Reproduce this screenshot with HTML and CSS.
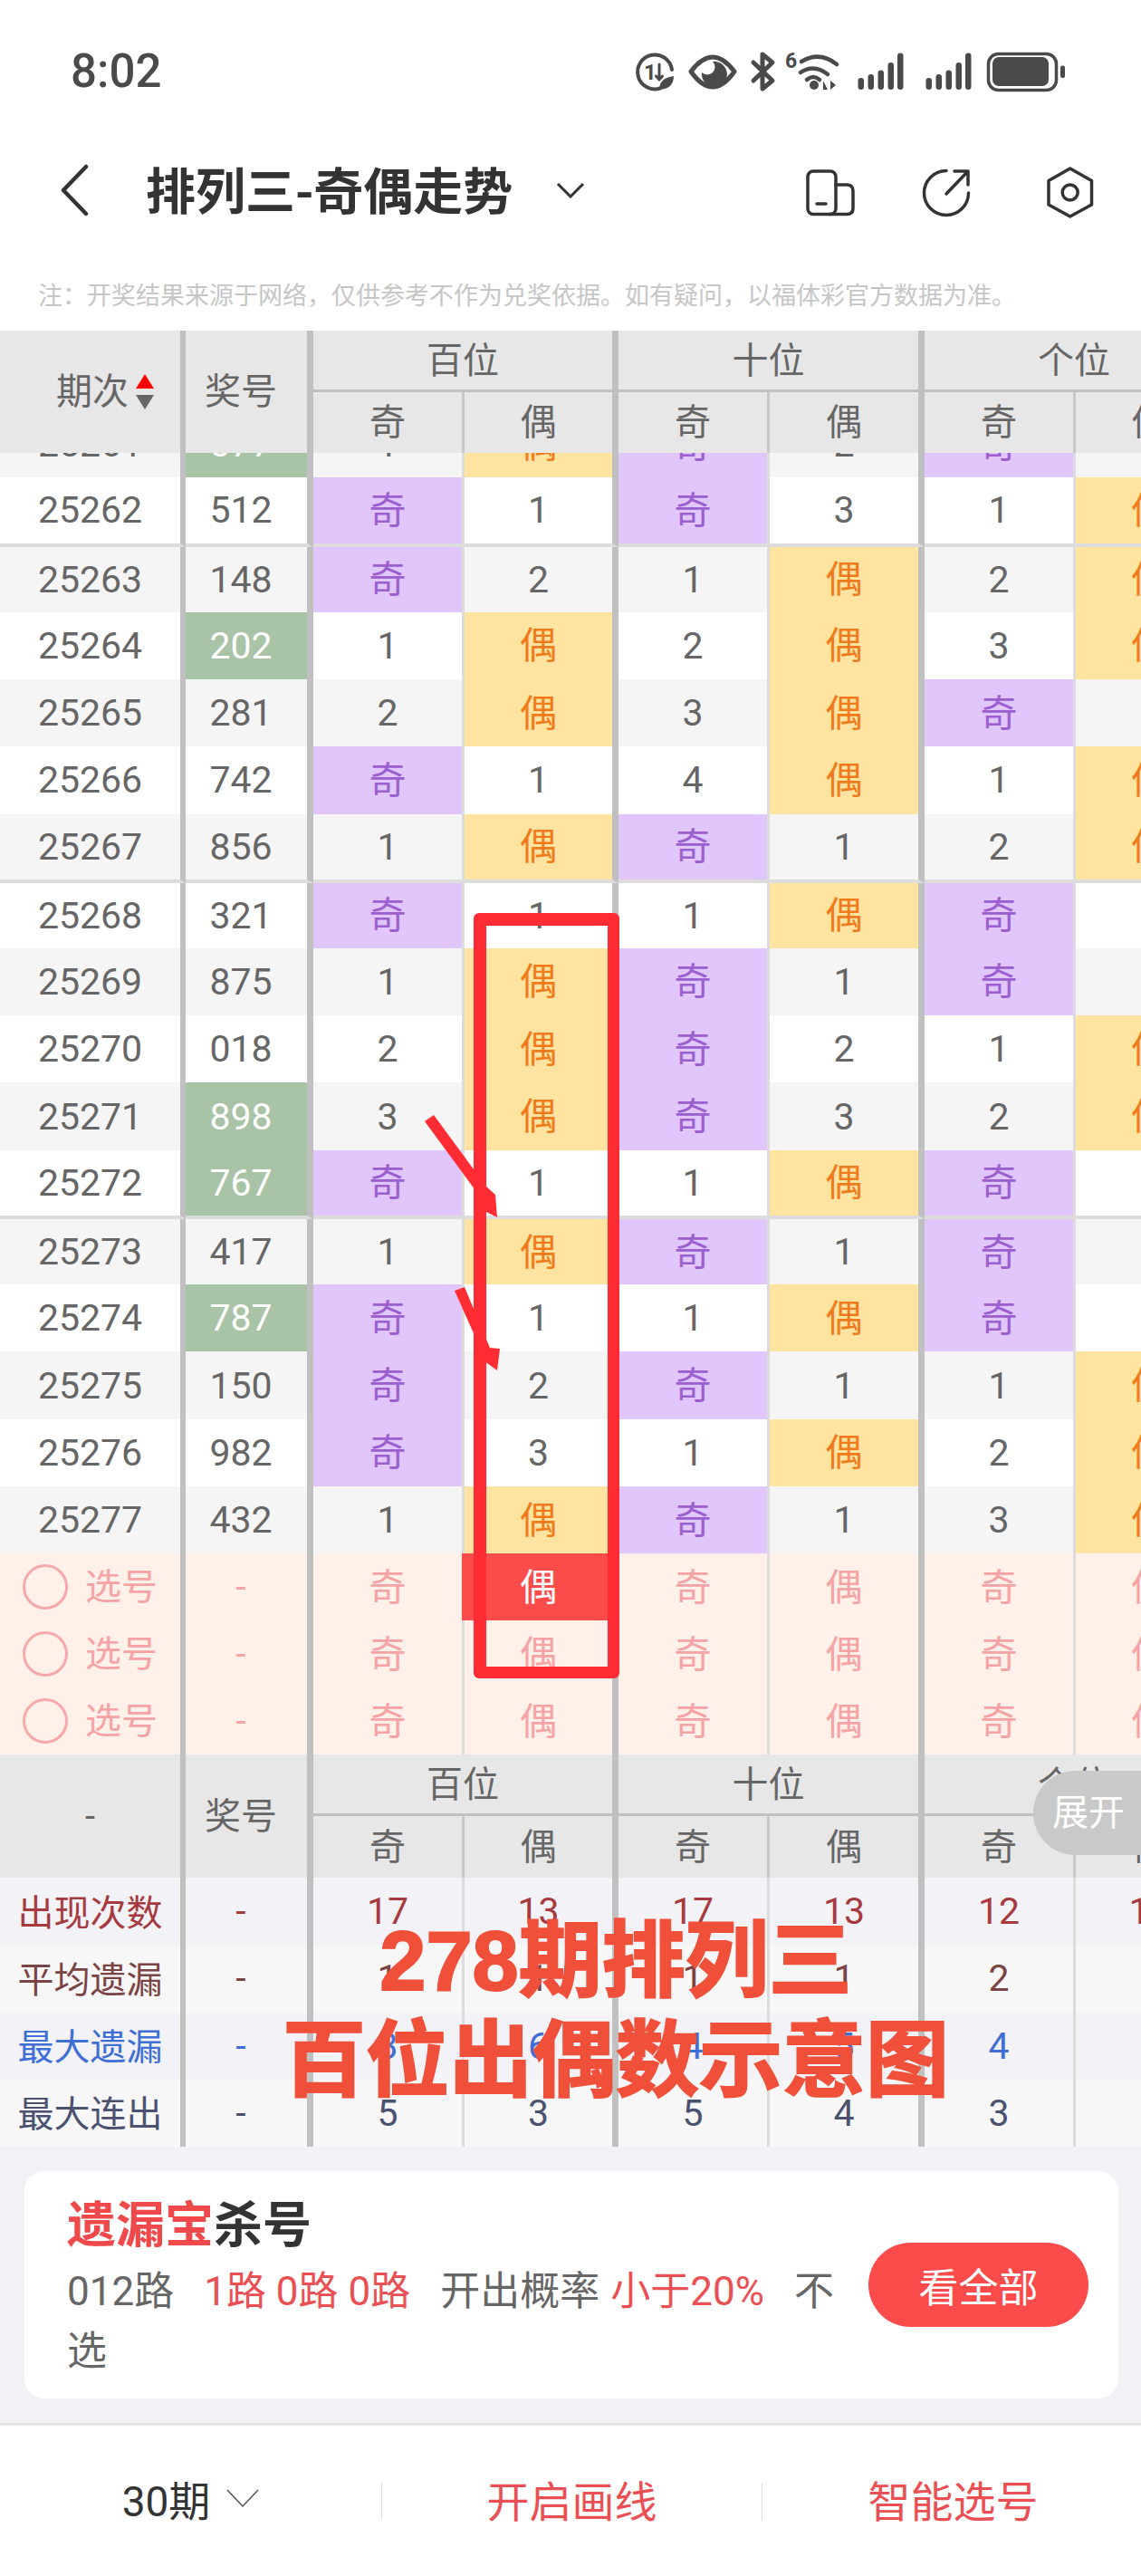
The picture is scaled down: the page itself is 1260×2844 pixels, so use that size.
FILE: index.html
```html
<!DOCTYPE html>
<html lang="zh-CN">
<head>
  <meta charset="UTF-8">
  <meta name="viewport" content="width=device-width, initial-scale=1.0">
  <title>排列三-奇偶走势</title>
  <link rel="stylesheet" href="styles.css">
</head>
<body>
<div class="page">

  <div class="status">
    <span class="time">8:02</span>
    <svg class="status-icons" width="490" height="65" viewBox="0 0 490 65">
      <g fill="none" stroke="#4a4a4a" stroke-linecap="round" stroke-linejoin="round">
        <path d="M34 51.5A19 19 0 1 1 47 31" stroke-width="4"/>
        <path d="M33 25V42M33 42l-3.5-4M33 42l3.5-4" stroke-width="3"/>
        <path d="M68 33Q80 17 92 17T116 33Q104 50 92 50T68 33Z" stroke-width="5"/>
        <path d="M137 23L158 43L147 52V14L158 23L137 43" stroke-width="5"/>
        <path d="M190 22Q210 10 229 25M189 34Q204 24 219 36M196 42Q203 36 210 42" stroke-width="4.5"/>
      </g>
      <g fill="#4a4a4a">
        <text class="icon-num" x="16" y="42">1</text>
        <path d="M33 53Q33 40 49 38Q49 52 33 53Z"/>
        <path d="M92 22A14 14 0 1 1 80 34A8 8 0 0 0 92 22Z"/>
        <text class="icon-num-big" x="172" y="29">6</text>
        <circle cx="204" cy="48" r="5"/>
        <path d="M214 53V43L219 53ZM222 53V43L228 48Z"/>
        <rect x="252.5" y="40" width="6.500" height="13" rx="3.250"/>
        <rect x="263.500" y="36" width="6.500" height="17" rx="3.250"/>
        <rect x="274.500" y="31.500" width="6.500" height="21.500" rx="3.250"/>
        <rect x="285.500" y="23" width="6.500" height="30" rx="3.250"/>
        <rect x="296" y="12.500" width="6.500" height="40.500" rx="3.250"/>
        <rect x="327.500" y="40" width="6.500" height="13" rx="3.250"/>
        <rect x="338.500" y="36" width="6.500" height="17" rx="3.250"/>
        <rect x="349.500" y="31.500" width="6.500" height="21.500" rx="3.250"/>
        <rect x="360.500" y="23" width="6.500" height="30" rx="3.250"/>
        <rect x="371" y="12.500" width="6.500" height="40.500" rx="3.250"/>
        <rect x="401" y="17" width="62" height="32" rx="7"/>
        <rect x="476" y="26.500" width="5" height="13.500" rx="2"/>
      </g>
      <rect x="396.500" y="13.500" width="75" height="40" rx="11" fill="none" stroke="#4a4a4a" stroke-width="3.500"/>
    </svg>
  </div>

  <div class="nav">
    <svg class="back" width="34" height="58" viewBox="0 0 34 58"><path d="M30 3L5 29L30 55" fill="none" stroke="#333" stroke-width="4.500" stroke-linecap="round" stroke-linejoin="round"/></svg>
    <h1 class="nav-title">排列三-奇偶走势</h1>
    <svg class="nav-arrow" width="32" height="18" viewBox="0 0 32 18"><path d="M2 2L16 16L30 2" fill="none" stroke="#333" stroke-width="3"/></svg>
    <svg class="nav-icons" width="340" height="75" viewBox="0 0 340 75">
      <g fill="none" stroke="#333" stroke-width="3.500" stroke-linecap="round" stroke-linejoin="round">
        <rect x="12" y="14" width="31" height="47.500" rx="6"/>
        <path d="M43 29H55Q62 29 62 36V55Q62 61.500 55 61.500H36M22 50H32"/>
        <path d="M165 13.500A24.500 24.500 0 1 0 189.500 38M165 39L188 15M174 14H189V29"/>
        <path d="M301.700 11L325.500 24.500V51L301.700 64L278 51V24.500Z"/>
        <circle cx="301.700" cy="37.500" r="8.500"/>
      </g>
    </svg>
  </div>

  <p class="note">注：开奖结果来源于网络，仅供参考不作为兑奖依据。如有疑问，以福体彩官方数据为准。</p>

  <div class="thead">
    <div class="hd-period">期次<span class="sort"><i class="sort-up"></i><i class="sort-down"></i></span></div>
    <div class="hd-num">奖号</div>
    <div class="group"><div class="group-title">百位</div><div>奇</div><div>偶</div></div>
    <div class="group"><div class="group-title">十位</div><div>奇</div><div>偶</div></div>
    <div class="group"><div class="group-title">个位</div><div>奇</div><div>偶</div></div>
  </div>

  <div class="tbody">
    <div class="rows">
      <div class="row gray"><div>25261</div><div class="g">877</div><div>1</div><div class="y">偶</div><div class="p">奇</div><div>2</div><div class="p">奇</div><div></div></div>
      <div class="row sep"><div>25262</div><div>512</div><div class="p">奇</div><div>1</div><div class="p">奇</div><div>3</div><div>1</div><div class="y">偶</div></div>
      <div class="row first gray"><div>25263</div><div>148</div><div class="p">奇</div><div>2</div><div>1</div><div class="y">偶</div><div>2</div><div class="y">偶</div></div>
      <div class="row"><div>25264</div><div class="g">202</div><div>1</div><div class="y">偶</div><div>2</div><div class="y">偶</div><div>3</div><div class="y">偶</div></div>
      <div class="row gray"><div>25265</div><div>281</div><div>2</div><div class="y">偶</div><div>3</div><div class="y">偶</div><div class="p">奇</div><div></div></div>
      <div class="row"><div>25266</div><div>742</div><div class="p">奇</div><div>1</div><div>4</div><div class="y">偶</div><div>1</div><div class="y">偶</div></div>
      <div class="row sep gray"><div>25267</div><div>856</div><div>1</div><div class="y">偶</div><div class="p">奇</div><div>1</div><div>2</div><div class="y">偶</div></div>
      <div class="row first"><div>25268</div><div>321</div><div class="p">奇</div><div>1</div><div>1</div><div class="y">偶</div><div class="p">奇</div><div></div></div>
      <div class="row gray"><div>25269</div><div>875</div><div>1</div><div class="y">偶</div><div class="p">奇</div><div>1</div><div class="p">奇</div><div></div></div>
      <div class="row"><div>25270</div><div>018</div><div>2</div><div class="y">偶</div><div class="p">奇</div><div>2</div><div>1</div><div class="y">偶</div></div>
      <div class="row gray"><div>25271</div><div class="g">898</div><div>3</div><div class="y">偶</div><div class="p">奇</div><div>3</div><div>2</div><div class="y">偶</div></div>
      <div class="row sep"><div>25272</div><div class="g">767</div><div class="p">奇</div><div>1</div><div>1</div><div class="y">偶</div><div class="p">奇</div><div></div></div>
      <div class="row first gray"><div>25273</div><div>417</div><div>1</div><div class="y">偶</div><div class="p">奇</div><div>1</div><div class="p">奇</div><div></div></div>
      <div class="row"><div>25274</div><div class="g">787</div><div class="p">奇</div><div>1</div><div>1</div><div class="y">偶</div><div class="p">奇</div><div></div></div>
      <div class="row gray"><div>25275</div><div>150</div><div class="p">奇</div><div>2</div><div class="p">奇</div><div>1</div><div>1</div><div class="y">偶</div></div>
      <div class="row"><div>25276</div><div>982</div><div class="p">奇</div><div>3</div><div>1</div><div class="y">偶</div><div>2</div><div class="y">偶</div></div>
      <div class="row gray"><div>25277</div><div>432</div><div>1</div><div class="y">偶</div><div class="p">奇</div><div>1</div><div>3</div><div class="y">偶</div></div>
    </div>
  </div>

  <div class="row pick"><div><i class="pick-dot"></i>选号</div><div>-</div><div>奇</div><div class="picked">偶</div><div>奇</div><div>偶</div><div>奇</div><div>偶</div></div>
  <div class="row pick"><div><i class="pick-dot"></i>选号</div><div>-</div><div>奇</div><div>偶</div><div>奇</div><div>偶</div><div>奇</div><div>偶</div></div>
  <div class="row pick"><div><i class="pick-dot"></i>选号</div><div>-</div><div>奇</div><div>偶</div><div>奇</div><div>偶</div><div>奇</div><div>偶</div></div>

  <div class="thead thead-bottom">
    <div class="hd-dash">-</div>
    <div class="hd-num">奖号</div>
    <div class="group"><div class="group-title">百位</div><div>奇</div><div>偶</div></div>
    <div class="group"><div class="group-title">十位</div><div>奇</div><div>偶</div></div>
    <div class="group"><div class="group-title">个位</div><div>奇</div><div>偶</div></div>
  </div>

  <div class="row stat stat-red"><div>出现次数</div><div>-</div><div>17</div><div>13</div><div>17</div><div>13</div><div>12</div><div>18</div></div>
  <div class="row stat stat-brown"><div>平均遗漏</div><div>-</div><div>1</div><div>1</div><div>1</div><div>1</div><div>2</div><div></div></div>
  <div class="row stat stat-blue"><div>最大遗漏</div><div>-</div><div>3</div><div>6</div><div>4</div><div>5</div><div>4</div><div></div></div>
  <div class="row stat stat-slate"><div>最大连出</div><div>-</div><div>5</div><div>3</div><div>5</div><div>4</div><div>3</div><div></div></div>

  <div class="below">
    <div class="card">
      <div class="card-text">
        <div class="card-title"><span class="red">遗漏宝</span>杀号</div>
        <div class="card-desc">012路<span class="red gap">1路 0路 0路</span><span class="gap">开出概率</span><span class="red gap-small">小于20%</span><span class="gap">不选</span></div>
      </div>
      <button class="card-btn" type="button">看全部</button>
    </div>
  </div>

  <div class="footer">
    <div class="foot-item foot-period">30期<svg width="36" height="20" viewBox="0 0 36 20"><path d="M1 1L18 19L35 1" fill="none" stroke="#555" stroke-width="1.500"/></svg></div>
    <i class="foot-bar"></i>
    <div class="foot-item foot-line red">开启画线</div>
    <i class="foot-bar"></i>
    <div class="foot-item foot-smart red">智能选号</div>
  </div>

  <!-- annotations drawn over the table -->
  <div class="expand">展开</div>
  <div class="mark-box"></div>
  <svg class="mark-arrows" width="100" height="300" viewBox="460 1220 100 300">
    <polygon points="469,1238 479,1231 537,1310 547,1319 549,1344 527,1333 527,1317" fill="#ff2d33"/>
    <polygon points="502,1425 513,1421 541,1488 552,1489 549,1513 527,1497 532,1492" fill="#ff2d33"/>
  </svg>
  <div class="promo">278期排列三<br>百位出偶数示意图</div>

</div>
</body>
</html>
```

FILE: styles.css
```css
* {
  box-sizing: border-box;
}

body {
  margin: 0;
  background-color: #fff;
}

.page {
  position: relative;
  width: 1260px;
  height: 2844px;
  overflow: hidden;
  font-family: Roboto, "Noto Sans CJK SC", sans-serif;
  font-size: 41px;
  color: #666;
  background-color: #fff;
}

.red {
  color: #e94f53;
}

/* status bar */
.status {
  display: flex;
  align-items: center;
  justify-content: space-between;
  height: 156px;
  padding: 0 75px 0 78px;
}

.time {
  font-size: 51px;
  font-weight: 500;
  color: #4a4a4a;
}

.status-icons {
  display: block;
}

.icon-num {
  font-family: Roboto, sans-serif;
  font-size: 24px;
  font-weight: 700;
}

.icon-num-big {
  font-family: Roboto, sans-serif;
  font-size: 23px;
  font-weight: 700;
}

/* nav */
.nav {
  display: flex;
  align-items: center;
  height: 108px;
  padding-left: 65px;
}

.back {
  flex: none;
}

.nav-title {
  margin: 0 0 6px 62px;
  font-family: "Noto Sans CJK SC", sans-serif;
  font-size: 55px;
  font-weight: 700;
  color: #333;
  white-space: nowrap;
}

.nav-arrow {
  margin-left: 48px;
}

.nav-icons {
  position: absolute;
  left: 880px;
  top: 175px;
}

.note {
  height: 101px;
  margin: 0;
  padding: 41px 0 0 42px;
  font-family: "Noto Sans CJK SC", sans-serif;
  font-size: 27px;
  line-height: 40px;
  color: #c6c6c6;
  white-space: nowrap;
}

/* table header */
.thead {
  display: grid;
  grid-template-columns: 205px 141px 337px 338px 337px;
  height: 135px;
  background-color: #e7e7e7;
}

.thead-bottom {
  height: 136px;
}

.hd-period,
.hd-num,
.hd-dash {
  display: flex;
  align-items: center;
  border-right: 6px solid #c0c0c0;
  font-size: 40px;
}

.hd-period {
  padding: 0 0 7px 62px;
}

.hd-dash {
  justify-content: center;
}

.hd-num {
  justify-content: center;
  padding: 0 12px 7px 0;
  border-right-width: 7px;
}

.sort {
  display: flex;
  flex-direction: column;
  gap: 7px;
  margin: 0 0 -7px 8px;
}

.sort-up {
  border: 10px solid transparent;
  border-top: 0;
  border-bottom: 16px solid #f00;
}

.sort-down {
  border: 10px solid transparent;
  border-bottom: 0;
  border-top: 16px solid #666;
}

.group {
  display: grid;
  grid-template-columns: 167px 1fr;
  grid-template-rows: 68px 1fr;
  font-size: 40px;
}

.group > div {
  display: flex;
  align-items: center;
  justify-content: center;
  padding-bottom: 7px;
  border-right: 3px solid #c8c8c8;
}

.group > div:last-child {
  border-right: 7px solid #c0c0c0;
}

.group .group-title {
  grid-column: 1 / 3;
  padding-bottom: 5px;
  border-right: 7px solid #c0c0c0;
  border-bottom: 3px solid #c0c0c0;
}

/* table rows */
.tbody {
  height: 1215px;
  overflow: hidden;
}

.rows {
  margin-top: -47px;
}

.row {
  display: grid;
  grid-template-columns: 205px 141px 167px 170px 167px 171px 167px 170px;
  width: 1358px;
  height: 74.33px;
  background-color: #fff;
}

.row > div {
  display: flex;
  align-items: center;
  justify-content: center;
  border-right: 7px solid #c0c0c0;
}

.row > div:nth-child(1) {
  border-right-width: 6px;
}

.row > div:nth-child(2) {
  padding-right: 12px;
}

.row > div:nth-child(3),
.row > div:nth-child(5),
.row > div:nth-child(7) {
  border-right: 3px solid #dcdcdc;
}

.row.gray {
  background-color: #f5f5f5;
}

.row.sep {
  height: 76.25px;
}

.row.sep > div {
  border-bottom: 4px solid #dcdcdc;
}

.row.first {
  height: 72px;
}

.row > .p {
  padding-bottom: 7px;
  background-color: #e1c6fc;
  color: #9b5fd0;
}

.row > .y {
  padding-bottom: 7px;
  background-color: #ffe3a0;
  color: #ef7b1c;
}

.row > .g {
  background-color: #a8c3a6;
  color: #fff;
}

/* pick rows */
.row.pick {
  height: 74px;
  background-color: #fff0ea;
  color: #f6a3a5;
}

.row.pick > div:nth-child(n+3) {
  padding-bottom: 7px;
}

.pick-dot {
  width: 50px;
  height: 50px;
  margin: 0 19px -7px 0;
  border: 3px solid #f6a8aa;
  border-radius: 50%;
}

.row.pick > div:nth-child(1) {
  justify-content: flex-start;
  padding: 0 0 7px 25px;
  font-size: 40px;
}

.row.pick > .picked {
  background-color: #fb4b4b;
  box-shadow: -3px 0 0 #fb4b4b;
  color: #fff;
}

/* stats */
.row.stat {
  height: 74.25px;
  background-color: #f7f7f7;
}

.row.stat-red,
.row.stat-blue {
  background-color: #f2f2f7;
}

.stat-red {
  color: #a63a3e;
}

.stat-brown {
  color: #7b4444;
}

.stat-blue {
  color: #3f6fd4;
}

.stat-slate {
  color: #4a5270;
}

.row.stat > div:nth-child(1) {
  padding-bottom: 3px;
  font-size: 40px;
}

/* card */
.below {
  height: 305px;
  padding: 27px 25px 0 27px;
  background-color: #f2f2f6;
}

.card {
  display: flex;
  align-items: center;
  justify-content: space-between;
  height: 251px;
  padding: 0 33px 0 47px;
  border-radius: 22px;
  background-color: #fff;
}

.card-text {
  align-self: flex-start;
  width: 860px;
  margin-top: 21px;
}

.card-title {
  font-family: "Noto Sans CJK SC", sans-serif;
  font-size: 54px;
  font-weight: 700;
  line-height: 70px;
  color: #333;
}

.card-title .red {
  color: #f0494c;
}

.card-desc {
  margin-top: 9px;
  font-size: 44px;
  line-height: 66px;
}

.gap {
  margin-left: 33px;
}

.gap-small {
  margin-left: 12px;
}

.card-btn {
  width: 243px;
  height: 93px;
  padding: 0;
  border: none;
  border-radius: 47px;
  background-color: #fb4b4b;
  font-family: "Noto Sans CJK SC", sans-serif;
  font-size: 44px;
  color: #fff;
}

/* footer */
.footer {
  display: flex;
  align-items: center;
  height: 169px;
  border-top: 3px solid #e4e4e4;
  background-color: #fff;
}

.foot-item {
  display: flex;
  align-items: center;
  justify-content: center;
  padding-bottom: 6px;
  font-size: 47px;
}

.foot-period {
  gap: 18px;
  width: 421px;
  font-size: 46px;
  color: #333;
}

.foot-line {
  width: 419px;
}

.foot-smart {
  flex: 1;
  padding-left: 3px;
}

.foot-bar {
  width: 1px;
  height: 41px;
  background-color: #ddd;
}

/* over the table */
.expand {
  position: absolute;
  left: 1141px;
  top: 1955px;
  display: flex;
  align-items: center;
  width: 119px;
  height: 93px;
  padding: 0 0 7px 21px;
  border-radius: 47px 0 0 47px;
  background-color: #c9c9c9;
  color: #fff;
  font-size: 40px;
}

.mark-box {
  position: absolute;
  left: 523px;
  top: 1008px;
  width: 161px;
  height: 845px;
  border: solid #ff2d33;
  border-width: 14px 13px 13px 14px;
  border-radius: 6px;
}

.mark-arrows {
  position: absolute;
  left: 460px;
  top: 1220px;
}

.promo {
  position: absolute;
  left: 50px;
  top: 2110px;
  width: 1260px;
  font-family: "Liberation Sans", "Noto Sans CJK SC", sans-serif;
  font-size: 92px;
  font-weight: 700;
  line-height: 110px;
  color: #f0503a;
  text-align: center;
  -webkit-text-stroke: 2px #f0503a;
}
```
